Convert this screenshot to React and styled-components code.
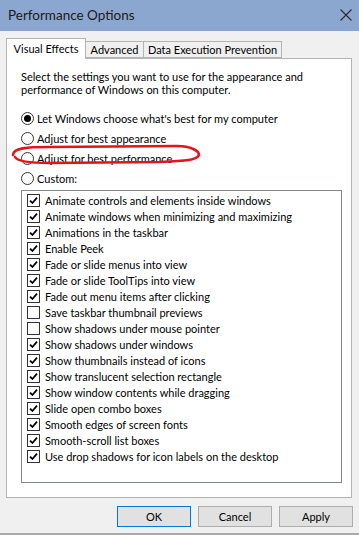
import React from "react";
import styled, { createGlobalStyle } from "styled-components";

const GlobalStyle = createGlobalStyle`
  html, body {
    margin: 0;
    padding: 0;
    background: #f0f0f0;
  }
  body {
    font-family: Lato, "Noto Sans", sans-serif;
    font-size: 11px;
    color: #000;
  }
`;

const Window = styled.div`
  width: 359px;
  height: 535px;
  box-sizing: border-box;
  display: flex;
  flex-direction: column;
  background: #f0f0f0;
  border-bottom: 2px solid #a9a9a9;
`;

const TitleBar = styled.div`
  height: 30px;
  flex: none;
  display: flex;
  align-items: center;
  justify-content: space-between;
  padding: 0 7px 1px 8px;
  background: #8ca7cf;
  font-size: 13.5px;
  color: #1a1a1a;
`;

const CloseIcon = () => (
  <svg width="12" height="12" viewBox="0 0 12 12">
    <path d="M0.5 0.5 L11.5 11.5 M11.5 0.5 L0.5 11.5" stroke="#2b2b2b" strokeWidth="1.1" />
  </svg>
);

const Body = styled.div`
  flex: 1;
  display: flex;
  flex-direction: column;
  padding: 7px 7px 0 6px;
`;

const TabStrip = styled.div`
  display: flex;
  align-items: flex-end;
  height: 20px;
  position: relative;
  z-index: 1;
`;

const Tab = styled.div`
  box-sizing: border-box;
  width: ${(p) => p.$w}px;
  height: ${(p) => (p.$active ? 21 : 17)}px;
  margin-bottom: ${(p) => (p.$active ? -1 : 0)}px;
  margin-left: ${(p) => (p.$first ? 0 : -1)}px;
  display: flex;
  align-items: ${(p) => (p.$active ? "flex-start" : "center")};
  justify-content: center;
  padding-top: ${(p) => (p.$active ? 3 : 0)}px;
  border: 1px solid #b4b4b4;
  border-bottom: ${(p) => (p.$active ? "none" : "1px solid #b4b4b4")};
  background: ${(p) => (p.$active ? "#fff" : "#f0f0f0")};
  white-space: nowrap;
`;

const Panel = styled.div`
  box-sizing: border-box;
  height: 440px;
  border: 1px solid #b4b4b4;
  background: #fff;
  padding: 11px 10px 0 14px;
  display: flex;
  flex-direction: column;
`;

const Intro = styled.p`
  margin: 0;
  line-height: 13px;
  white-space: nowrap;
`;

const RadioGroup = styled.div`
  position: relative;
  margin-top: 12px;
  display: flex;
  flex-direction: column;
`;

const RadioRow = styled.label`
  height: 20px;
  display: flex;
  align-items: center;
  gap: 3px;
  white-space: nowrap;
`;

const RadioDot = styled.span`
  box-sizing: border-box;
  width: 13px;
  height: 13px;
  border-radius: 50%;
  border: 1px solid #333;
  background: #fff;
  display: flex;
  align-items: center;
  justify-content: center;
  &::after {
    content: "";
    width: 7px;
    height: 7px;
    border-radius: 50%;
    background: #000;
    display: ${(p) => (p.$on ? "block" : "none")};
  }
`;

const Scribble = styled.svg`
  position: absolute;
  left: -12px;
  top: 34px;
  pointer-events: none;
`;

const ListBox = styled.div`
  box-sizing: border-box;
  margin-top: 2px;
  width: 321px;
  height: 293px;
  border: 1px solid #828790;
  padding: 1px 0 0 5px;
  display: flex;
  flex-direction: column;
`;

const CheckRow = styled.div`
  height: 16px;
  display: flex;
  align-items: center;
  gap: 5px;
  white-space: nowrap;
`;

const Box = styled.span`
  box-sizing: border-box;
  flex: none;
  width: 13px;
  height: 13px;
  border: 1px solid #333;
  background: #fff;
  display: flex;
  align-items: center;
  justify-content: center;
`;

const Check = () => (
  <svg width="9" height="9" viewBox="0 0 9 9">
    <path d="M1 4.6 L3.4 7 L8 1.6" fill="none" stroke="#000" strokeWidth="1.8" />
  </svg>
);

const Footer = styled.div`
  display: flex;
  justify-content: flex-end;
  gap: 7px;
  margin-top: 8px;
  margin-right: -1px;
`;

const Button = styled.button`
  box-sizing: border-box;
  width: 74px;
  height: 21px;
  font: inherit;
  color: #000;
  background: #e1e1e1;
  border: 1px solid ${(p) => (p.$default ? "#0078d7" : "#adadad")};
  padding: 0;
`;

const options = [
  { label: "Let Windows choose what's best for my computer", on: true },
  { label: "Adjust for best appearance" },
  { label: "Adjust for best performance" },
  { label: "Custom:" },
];

const effects = [
  ["Animate controls and elements inside windows", true],
  ["Animate windows when minimizing and maximizing", true],
  ["Animations in the taskbar", true],
  ["Enable Peek", true],
  ["Fade or slide menus into view", true],
  ["Fade or slide ToolTips into view", true],
  ["Fade out menu items after clicking", true],
  ["Save taskbar thumbnail previews", false],
  ["Show shadows under mouse pointer", false],
  ["Show shadows under windows", true],
  ["Show thumbnails instead of icons", true],
  ["Show translucent selection rectangle", true],
  ["Show window contents while dragging", true],
  ["Slide open combo boxes", true],
  ["Smooth edges of screen fonts", true],
  ["Smooth-scroll list boxes", true],
  ["Use drop shadows for icon labels on the desktop", true],
];

export default function App() {
  return (
    <>
      <GlobalStyle />
      <Window>
        <TitleBar>
          <span>Performance Options</span>
          <CloseIcon />
        </TitleBar>
        <Body>
          <TabStrip>
            <Tab $w={80} $active $first>Visual Effects</Tab>
            <Tab $w={59}>Advanced</Tab>
            <Tab $w={139}>Data Execution Prevention</Tab>
          </TabStrip>
          <Panel>
            <Intro>
              Select the settings you want to use for the appearance and
              <br />
              performance of Windows on this computer.
            </Intro>
            <RadioGroup>
              {options.map((o) => (
                <RadioRow key={o.label}>
                  <RadioDot $on={o.on} />
                  {o.label}
                </RadioRow>
              ))}
              {/* red marker ring drawn over the third option */}
              <Scribble width="200" height="30" viewBox="0 0 200 30">
                <path
                  d="M4 13 C4 6 18 5 40 5 L168 4 C182 4 190 9 190 13 C188 18 178 19 150 20 L40 21 C20 21 8 19 6 15"
                  fill="none"
                  stroke="#e5131d"
                  strokeWidth="2.6"
                  strokeLinecap="round"
                />
              </Scribble>
            </RadioGroup>
            <ListBox>
              {effects.map(([label, on]) => (
                <CheckRow key={label}>
                  <Box>{on && <Check />}</Box>
                  {label}
                </CheckRow>
              ))}
            </ListBox>
          </Panel>
          <Footer>
            <Button $default>OK</Button>
            <Button>Cancel</Button>
            <Button>Apply</Button>
          </Footer>
        </Body>
      </Window>
    </>
  );
}
